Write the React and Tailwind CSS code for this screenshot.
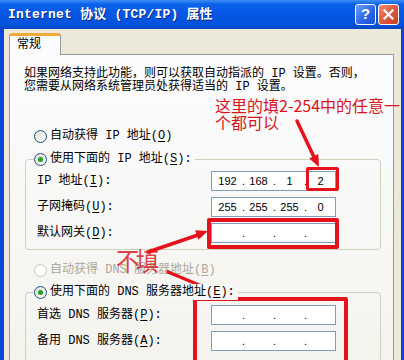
import clsx from 'clsx';

const Radio = ({ checked, disabled }) => (
  <span
    className={clsx(
      'w-[13px] h-[13px] rounded-full border flex items-center justify-center shrink-0',
      disabled
        ? 'border-[#cac8bb] bg-white'
        : 'border-[#1c5180] bg-[linear-gradient(135deg,#dcdcd7,#ffffff)]'
    )}
  >
    {checked && <span className="w-[5px] h-[5px] rounded-full bg-[#21a121]" />}
  </span>
);

const Key = ({ children }) => <span className="underline underline-offset-2">{children}</span>;

const IpBox = ({ parts = ['', '', '', ''] }) => (
  <div className="w-[125px] h-[20px] border border-[#7f9db9] bg-white flex items-center pl-[2px] text-[11px] leading-[14px] font-['Liberation_Sans',sans-serif] text-black">
    {parts.map((p, i) => (
      <div key={i} className="flex items-center">
        <span className="w-[27px] text-center">{p}</span>
        {i < 3 && <span className="w-[4px] text-right">.</span>}
      </div>
    ))}
  </div>
);

const Row = ({ label, parts }) => (
  <div className="flex items-center h-[20px]">
    <span className="w-[174px] text-[12px] leading-[16px]">{label}</span>
    <IpBox parts={parts} />
  </div>
);

const App = () => {
  return (
    <div className="w-[404px] h-[360px] overflow-hidden relative bg-[#0846d8] flex flex-col font-['Liberation_Mono','Noto_Sans_CJK_SC',monospace] text-black">
      {/* Title bar */}
      <div className="h-[29px] shrink-0 flex items-center justify-between pl-[8px] pr-[5px] bg-[linear-gradient(to_bottom,#3d8df5_0%,#0b62ea_15%,#0656e4_50%,#0452dc_85%,#0846c4_100%)]">
        <span className="text-white font-bold text-[13px] tracking-[0.2px] [text-shadow:1px_1px_0_#0a2a8a]">
          Internet 协议 (TCP/IP) 属性
        </span>
        <div className="flex gap-[2px]">
          <div className="w-[21px] h-[21px] rounded-[3px] border border-white flex items-center justify-center bg-[linear-gradient(135deg,#6a9cf8,#2c63e6_60%,#1e4fd4)] text-white font-bold text-[15px] font-['Liberation_Sans',sans-serif]">
            ?
          </div>
          <div className="w-[21px] h-[21px] rounded-[3px] border border-white flex items-center justify-center bg-[linear-gradient(135deg,#f09070,#e0553a_55%,#c8401e)]">
            <svg width="11" height="11" viewBox="0 0 11 11">
              <path d="M1.5 1.5 L9.5 9.5 M9.5 1.5 L1.5 9.5" stroke="white" strokeWidth="2.2" strokeLinecap="square" />
            </svg>
          </div>
        </div>
      </div>

      {/* Window body */}
      <div className="flex-1 ml-[4px] mr-[3px] bg-[#ece9d8] pl-[5px] pr-[7px] pt-[4px] flex flex-col">
        {/* Tab */}
        <div className="relative z-10 -mb-px w-[52px] h-[22px] bg-[#fcfcfe] border-x border-[#919b9c] border-t-[3px] border-t-[#f3a83a] rounded-t-[3px] text-[12px] pl-[7px] pt-[2px] leading-[14px]">
          常规
        </div>

        {/* Panel */}
        <div className="flex-1 border border-[#919b9c] bg-[linear-gradient(to_bottom,#fcfcfe,#f4f3ee)] pl-[14px] pr-[12px] pt-[13px]">
          <p className="text-[12px] leading-[13px] whitespace-nowrap">
            如果网络支持此功能，则可以获取自动指派的 IP 设置。否则，
            <br />
            您需要从网络系统管理员处获得适当的 IP 设置。
          </p>

          <div className="mt-[34px] h-[16px] flex items-center gap-[3px] pl-[10px] text-[12px] leading-[16px]">
            <Radio />
            <span>
              自动获得 IP 地址(<Key>O</Key>)
            </span>
          </div>

          {/* Static IP group */}
          <div className="mt-[7px] ml-[1px]">
            <div className="relative z-10 ml-[9px] h-[16px] w-fit flex items-center gap-[3px] pr-[3px] bg-[#fbfbfc] text-[12px] leading-[16px]">
              <Radio checked />
              <span>
                使用下面的 IP 地址(<Key>S</Key>):
              </span>
            </div>
            <div className="-mt-[8px] border border-[#d0d0bf] rounded-[4px] pt-[11px] pl-[11px] pb-[6px] flex flex-col gap-[6px]">
              <Row label={<>IP 地址(<Key>I</Key>):</>} parts={['192', '168', '1', '2']} />
              <Row label={<>子网掩码(<Key>U</Key>):</>} parts={['255', '255', '255', '0']} />
              <Row label={<>默认网关(<Key>D</Key>):</>} />
            </div>
          </div>

          <div className="mt-[12px] h-[16px] flex items-center gap-[3px] pl-[10px] text-[12px] leading-[16px] text-[#aca899]">
            <Radio disabled />
            <span>
              自动获得 DNS 服务器地址(<Key>B</Key>)
            </span>
          </div>

          {/* DNS group */}
          <div className="mt-[6px] ml-[1px]">
            <div className="relative z-10 ml-[9px] h-[16px] w-fit flex items-center gap-[3px] pr-[3px] bg-[#f7f7f5] text-[12px] leading-[16px]">
              <Radio checked />
              <span>
                使用下面的 DNS 服务器地址(<Key>E</Key>):
              </span>
            </div>
            <div className="-mt-[8px] border border-[#d0d0bf] rounded-[4px] pt-[12px] pl-[11px] pb-[10px] flex flex-col gap-[6px]">
              <Row label={<>首选 DNS 服务器(<Key>P</Key>):</>} />
              <Row label={<>备用 DNS 服务器(<Key>A</Key>):</>} />
            </div>
          </div>
        </div>
      </div>

      {/* Red annotations over the dialog */}
      <div className="absolute left-[306px] top-[167px] w-[33px] h-[24px] border-[3px] border-[#e3121b] rounded-[2px]" />
      <div className="absolute left-[207px] top-[218px] w-[132px] h-[31px] border-[4px] border-[#e3121b] rounded-[2px]" />
      <div className="absolute left-[193px] top-[297px] w-[155px] h-[75px] border-[4px] border-[#e3121b] rounded-[2px]" />

      <div className="absolute left-[215px] top-[97px] text-[16px] leading-[17px] text-[#d8141c] font-['Noto_Sans_CJK_SC',sans-serif] whitespace-nowrap">
        这里的填2-254中的任意一
        <br />
        个都可以
      </div>

      <div className="absolute left-[116px] top-[245px] text-[26px] leading-[30px] text-[#d8141c] font-['Noto_Sans_CJK_SC',sans-serif] tracking-[-4px] scale-x-90 origin-left opacity-80">
        不填
      </div>

      <svg className="absolute inset-0 pointer-events-none" width="404" height="360">
        <g stroke="#e3121b" strokeWidth="3.5" strokeLinecap="round">
          <line x1="297" y1="121" x2="314" y2="157" />
          <line x1="148" y1="252" x2="198" y2="235" />
          <line x1="168" y1="272" x2="216" y2="292" />
        </g>
        <g fill="#e3121b">
          <polygon points="319,167 309.3,158.4 318.3,154.1" />
          <polygon points="208,231 198.3,239.7 195.1,230.3" />
          <polygon points="226,297 213,296.8 217,287.6" />
        </g>
      </svg>
    </div>
  );
};

export default App;
